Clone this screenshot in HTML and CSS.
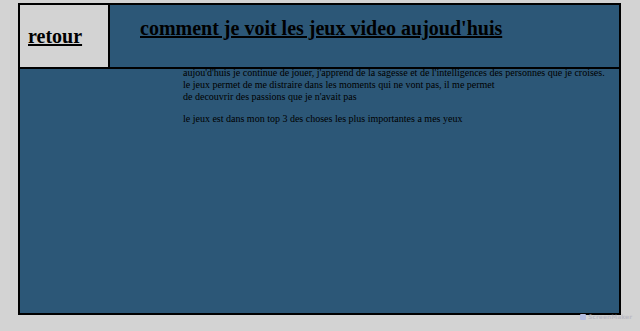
FILE: index.html
```html
<!DOCTYPE html>
<html lang="fr">

<head>
    <meta charset="UTF-8">
    <meta name="viewport" content="width=device-width, initial-scale=1.0">
    <title>jeux video</title>
    <link rel="stylesheet" href="styles.css">
</head>

<body>
    <div class="page">
        <!-- En-tete -->
        <div class="header">
            <a class="retour" href="#">retour</a>
            <h1 class="titre">comment je voit les jeux video aujoud'huis</h1>
        </div>

        <!-- Texte -->
        <div class="contenu">
            <p>aujou'd'huis je continue de jouer, j'apprend de la sagesse et de l'intelligences des personnes que je croises.<br>
                le jeux permet de me distraire dans les moments qui ne vont pas, il me permet<br>
                de decouvrir des passions que je n'avait pas</p>
            <p>le jeux est dans mon top 3 des choses les plus importantes a mes yeux</p>
        </div>
    </div>

    <div class="marque"><span class="logo"></span>ScreenMaker</div>
</body>

</html>
```

FILE: styles.css
```css
/* General */
body {
    margin: 0;
    background: #d3d3d3;
    font-family: 'Liberation Serif', 'Times New Roman', serif;
    color: #000;
}

/* Cadre */
.page {
    margin: 3px 0 0 18px;
    width: 599px;
    height: 308px;
    border: 2px solid #000;
    background: #2c5777;
}

/* En-tete */
.header {
    display: flex;
    height: 62px;
    border-bottom: 2px solid #000;
}

.retour {
    display: flex;
    align-items: center;
    width: 80px;
    padding: 0 0 0 8px;
    background: #d3d3d3;
    border-right: 2px solid #000;
    color: #000;
    font-weight: bold;
    font-size: 20px;
}

.titre {
    margin: 12px 0 0 30px;
    font-size: 20px;
    text-decoration: underline;
}

/* Texte */
.contenu {
    margin-top: -2px;
    padding-left: 163px;
    font-size: 10px;
    line-height: 12px;
}

.contenu p {
    margin: 0 0 10px;
}

/* Filigrane */
.marque {
    position: absolute;
    left: 580px;
    top: 313px;
    display: flex;
    align-items: center;
    gap: 2px;
    font-family: 'DejaVu Sans', sans-serif;
    font-size: 6px;
    font-weight: bold;
    color: #bcbcc4;
}

.logo {
    width: 6px;
    height: 6px;
    background: #b4bde0;
    border-radius: 1px;
}
```
